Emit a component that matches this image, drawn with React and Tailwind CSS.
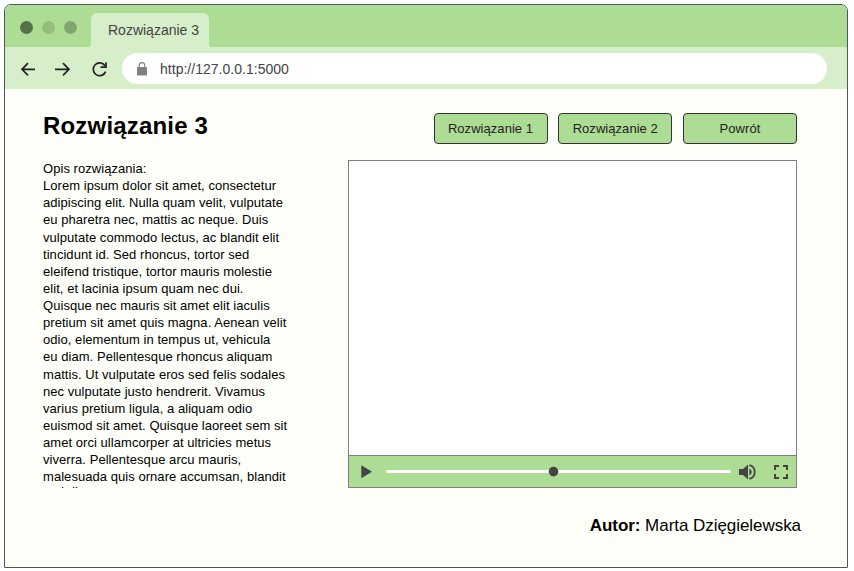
const lines = [
  'Opis rozwiązania:',
  'Lorem ipsum dolor sit amet, consectetur',
  'adipiscing elit. Nulla quam velit, vulputate',
  'eu pharetra nec, mattis ac neque. Duis',
  'vulputate commodo lectus, ac blandit elit',
  'tincidunt id. Sed rhoncus, tortor sed',
  'eleifend tristique, tortor mauris molestie',
  'elit, et lacinia ipsum quam nec dui.',
  'Quisque nec mauris sit amet elit iaculis',
  'pretium sit amet quis magna. Aenean velit',
  'odio, elementum in tempus ut, vehicula',
  'eu diam. Pellentesque rhoncus aliquam',
  'mattis. Ut vulputate eros sed felis sodales',
  'nec vulputate justo hendrerit. Vivamus',
  'varius pretium ligula, a aliquam odio',
  'euismod sit amet. Quisque laoreet sem sit',
  'amet orci ullamcorper at ultricies metus',
  'viverra. Pellentesque arcu mauris,',
  'malesuada quis ornare accumsan, blandit',
  'sed diam.',
];

function TabBar() {
  return (
    <div className="flex h-[42px] items-end bg-[#addd94]">
      <div className="mb-[13.5px] ml-[14.5px] flex gap-[9px]">
        <span className="size-[13px] rounded-full bg-[#576f4a]" />
        <span className="size-[13px] rounded-full bg-[#94bd7e]" />
        <span className="size-[13px] rounded-full bg-[#82a66f]" />
      </div>
      <svg className="ml-[12.5px] h-[3px] w-[2px]" viewBox="0 0 2 3">
        <path d="M2 0V3H0Q2 3 2 0Z" fill="#d6eeca" />
      </svg>
      <div className="flex h-[34px] w-[118px] items-center rounded-t-[6px] bg-[#d6eeca] pl-[17px] text-[14px] whitespace-nowrap text-[#444444]">
        Rozwiązanie 3
      </div>
      <svg className="h-[3px] w-[2px]" viewBox="0 0 2 3">
        <path d="M0 0V3H2Q0 3 0 0Z" fill="#d6eeca" />
      </svg>
    </div>
  );
}

function AddressBar() {
  return (
    <div className="flex h-[42px] items-center bg-[#d6eeca]">
      <svg className="ml-[14px] h-[24px] w-[90px] shrink-0" viewBox="0 0 90 24" fill="none" stroke="#222" strokeWidth="1.7">
        <path d="M16 13.3H3M9 7.2L3 13.3L9 19.4" />
        <path d="M36 13.3H50M44 7.2L50 13.3L44 19.4" />
        <path d="M86 9.8A6.4 6.4 0 1 0 86.6 15.6" />
        <path d="M87 6.3V11.2H81.5" />
      </svg>
      <div className="ml-[13px] flex h-[31px] w-[705px] items-center rounded-full bg-white pl-[15px]">
        <svg className="mt-[1px] h-[14px] w-[10px]" viewBox="0 0 10 14">
          <rect y="5" width="10" height="8.6" rx="0.8" fill="#808080" />
          <path d="M2.2 5.5V3.4a2.8 2.8 0 0 1 5.6 0V5.5" fill="none" stroke="#808080" strokeWidth="1.1" />
        </svg>
        <span className="mt-[2px] ml-[13px] text-[14px] tracking-[0.02px] whitespace-nowrap text-[#444444]">http://127.0.0.1:5000</span>
      </div>
    </div>
  );
}

function NavButton({ children }) {
  return (
    <button className="flex h-[31px] w-[114px] items-center justify-center rounded-[4px] border border-[#333333] bg-[#addd94] text-[13px] tracking-[0.05px] whitespace-nowrap text-[#222222]">
      {children}
    </button>
  );
}

function Player() {
  return (
    <div className="flex h-[328px] w-[449px] flex-col border border-[#808080] bg-white">
      <div className="flex-1" />
      <div className="flex h-[32px] items-center border-t border-[#808080] bg-[#addd94]">
        <svg className="ml-[12px] h-[14px] w-[12px]" viewBox="0 0 12 14">
          <path d="M0.3 0.3L11 6.7L0.3 13.2Z" fill="#444444" />
        </svg>
        <svg className="ml-[13px] h-[12px] w-[346px]" viewBox="0 0 346 12">
          <path d="M1.5 5.5H343.5" stroke="white" strokeWidth="3" strokeLinecap="round" />
          <circle cx="167.5" cy="5.6" r="4.8" fill="#444444" />
        </svg>
        <svg className="ml-[7px] h-[16px] w-[17px]" viewBox="0 0 17 16">
          <path d="M0 5H4L9 0.5V15.5L4 11H0Z" fill="#444444" />
          <path d="M10.4 4.5Q12.8 5.6 12.8 8T10.4 11.5Z" fill="#444444" />
          <path d="M10.3 1.1A7.1 7.1 0 0 1 10.3 14.9" fill="none" stroke="#444444" strokeWidth="1.8" />
        </svg>
        <svg className="ml-[18px] h-[14px] w-[14px]" viewBox="0 0 14 14" fill="none" stroke="#444444" strokeWidth="2">
          <path d="M1 5V1H5M9 1H13V5M13 9V13H9M5 13H1V9" />
        </svg>
      </div>
    </div>
  );
}

export default function App() {
  return (
    <div className="h-[571px] w-[854px] overflow-hidden bg-white pt-[4px] pl-[4px] font-['Liberation_Sans',Arial,sans-serif]">
      <div className="h-[564px] w-[844px] overflow-hidden rounded-t-[7px] border border-[#555555] bg-[#fefff8]">
        <TabBar />
        <AddressBar />
        <div className="flex items-start justify-between pt-[24px] pr-[50px] pl-[38px]">
          <h1 className="text-[24px] leading-[26px] font-bold tracking-[0.18px] whitespace-nowrap text-black">Rozwiązanie 3</h1>
          <div className="flex gap-[10.75px]">
            <NavButton>Rozwiązanie 1</NavButton>
            <NavButton>Rozwiązanie 2</NavButton>
            <NavButton>Powrót</NavButton>
          </div>
        </div>
        <div className="mt-[16px] flex h-[328px] justify-between pr-[50px] pl-[38px]">
          <div className="h-[328px] w-[260px] overflow-hidden text-[13px] leading-[17.12px] tracking-[0.05px] whitespace-nowrap text-black">
            {lines.map((line) => (
              <p key={line} className="last:-mt-[2px]">{line}</p>
            ))}
          </div>
          <Player />
        </div>
        <p className="mt-[27px] mr-[46px] text-right text-[17px] leading-[22px] tracking-[-0.05px] whitespace-nowrap text-black">
          <b>Autor:</b> Marta Dzięgielewska
        </p>
      </div>
    </div>
  );
}
